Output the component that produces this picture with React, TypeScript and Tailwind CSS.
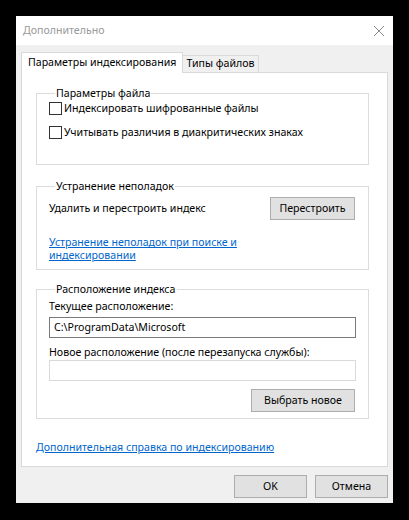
import React from "react";

const font = { fontFamily: '"Noto Sans", "Open Sans", "DejaVu Sans", sans-serif' };

function Checkbox({ label }: { label: string }) {
  return (
    <label className="flex items-center gap-[2px] h-[13px]">
      <span className="w-[13px] h-[13px] border border-[#333333] bg-white shrink-0" />
      <span className="text-[10.6px] text-black leading-none">{label}</span>
    </label>
  );
}

function Group({ title, className, children }: { title: string; className?: string; children: React.ReactNode }) {
  return (
    <fieldset className={`border border-[#dcdcdc] ml-[14px] mr-[18px] pl-[12px] pr-[12px] ${className ?? ""}`}>
      <legend className="ml-[6px] px-[1px] text-[10.6px] text-black leading-[14px]">{title}</legend>
      {children}
    </fieldset>
  );
}

function WinButton({ label, className }: { label: string; className?: string }) {
  return (
    <button className={`h-[23px] border border-[#adadad] bg-[#e1e1e1] text-[10.6px] text-black leading-none ${className ?? ""}`}>
      {label}
    </button>
  );
}

export default function App() {
  return (
    <div className="w-[409px] h-[520px] bg-black p-[16px]" style={font}>
      <div className="w-[377px] h-[487px] bg-[#f0f0f0] flex flex-col">
        {/* title bar */}
        <div className="h-[29px] bg-white flex items-center justify-between pl-[7px] pr-[7px]">
          <span className="text-[10.6px] text-[#999999]">Дополнительно</span>
          <svg width="12" height="12" viewBox="0 0 12 12" className="mr-[1px]">
            <path d="M1 1 L11 11 M11 1 L1 11" stroke="#8a8a8a" strokeWidth="1" />
          </svg>
        </div>

        {/* tabs */}
        <div className="flex items-end px-[5px] mt-[7px] h-[20px]">
          <div className="relative z-10 h-[21px] -mb-[1px] bg-white border border-[#d9d9d9] border-b-0 px-[6px] flex items-center text-[10.6px] text-black">
            Параметры индексирования
          </div>
          <div className="h-[17px] bg-[#f0f0f0] border border-[#d9d9d9] border-b-0 border-l-0 px-[3px] flex items-center text-[10.6px] text-black">
            Типы файлов
          </div>
        </div>

        {/* tab panel */}
        <div className="mx-[5px] h-[395px] bg-white border border-[#d9d9d9] flex flex-col pt-[13px]">
          <Group title="Параметры файла" className="h-[79px]">
            <div className="flex flex-col gap-[11px] pt-[2px]">
              <Checkbox label="Индексировать шифрованные файлы" />
              <Checkbox label="Учитывать различия в диакритических знаках" />
            </div>
          </Group>

          <Group title="Устранение неполадок" className="h-[91px] mt-[14px]">
            <div className="flex items-center justify-between pt-[4px]">
              <span className="text-[10.6px] text-black">Удалить и перестроить индекс</span>
              <WinButton label="Перестроить" className="w-[85px] mr-[1px]" />
            </div>
            <a className="block mt-[16px] text-[10.6px] leading-[13px] text-[#0066cc] underline w-[195px]">
              Устранение неполадок при поиске и индексировании
            </a>
          </Group>

          <Group title="Расположение индекса" className="h-[137px] mt-[12px]">
            <div className="text-[10.6px] text-black pt-[3px] leading-[14px]">Текущее расположение:</div>
            <div className="mt-[4px] h-[21px] border border-[#7a7a7a] bg-white flex items-center px-[4px] text-[10.6px] text-black">
              C:\ProgramData\Microsoft
            </div>
            <div className="text-[10.6px] text-black mt-[7px] leading-[14px]">Новое расположение (после перезапуска службы):</div>
            <div className="mt-[1px] h-[21px] border border-[#d9d9d9] bg-white" />
            <div className="flex justify-end mt-[8px]">
              <WinButton label="Выбрать новое" className="w-[104px] mr-[1px]" />
            </div>
          </Group>

          <a className="ml-[14px] mt-[21px] text-[10.6px] text-[#0066cc] underline leading-[14px]">
            Дополнительная справка по индексированию
          </a>
        </div>

        {/* footer buttons */}
        <div className="flex justify-end gap-[8px] pr-[5px] mt-[8px]">
          <WinButton label="OK" className="w-[73px]" />
          <WinButton label="Отмена" className="w-[73px]" />
        </div>
      </div>
    </div>
  );
}
